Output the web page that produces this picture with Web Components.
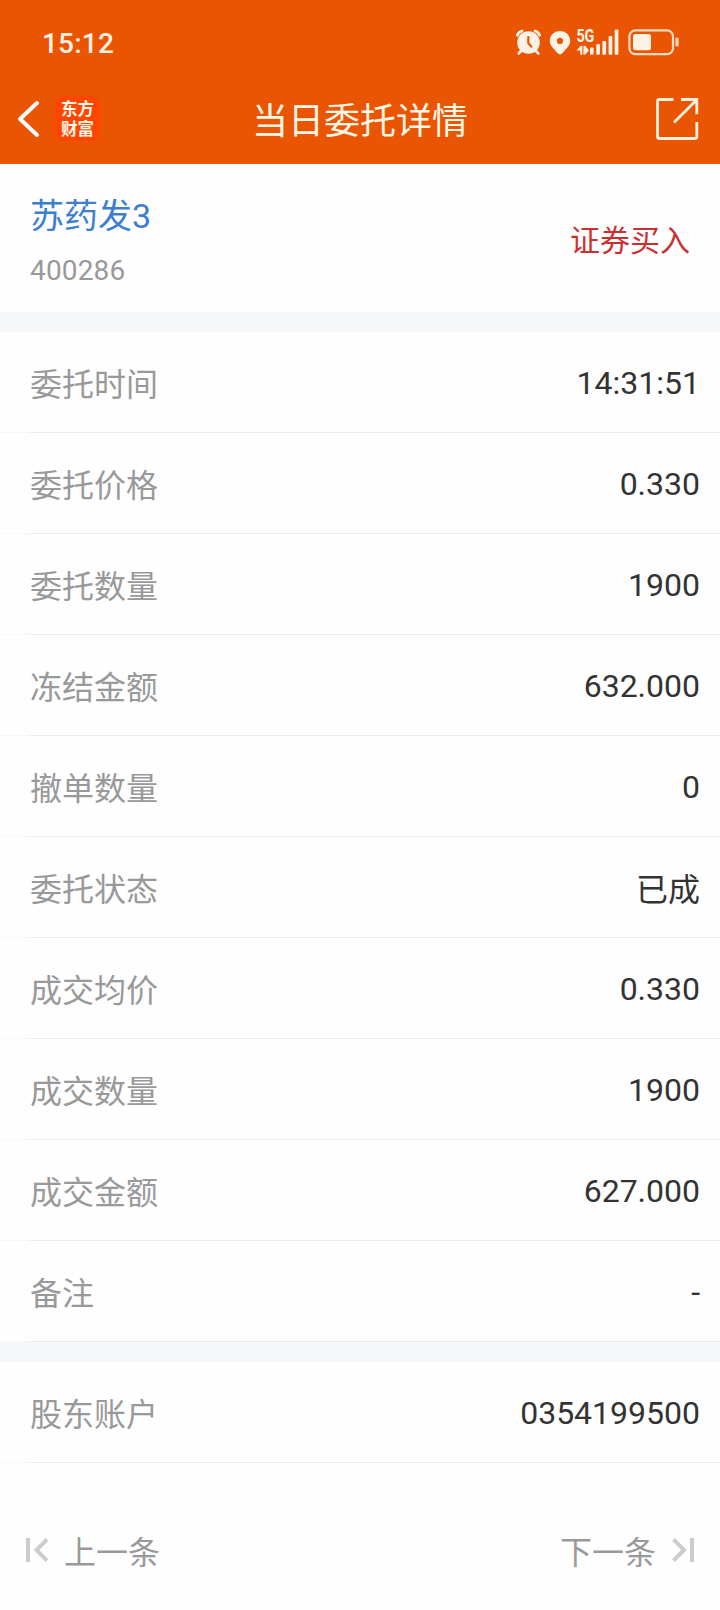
<!DOCTYPE html>
<html lang="zh-CN">
<head>
<meta charset="utf-8">
<title>当日委托详情</title>
<style>
  body {
    margin: 0;
    width: 720px;
    height: 1610px;
    overflow: hidden;
    background: #fefefe;
    color: #333;
    font-family: Roboto, "Noto Sans CJK SC", sans-serif;
  }
</style>
</head>
<body>
<order-page>
  <status-bar time="15:12"></status-bar>
  <title-bar>当日委托详情</title-bar>
  <stock-head code="400286" side="证券买入">苏药发3</stock-head>
  <section-gap></section-gap>
  <detail-row label="委托时间">14:31:51</detail-row>
  <detail-row label="委托价格">0.330</detail-row>
  <detail-row label="委托数量">1900</detail-row>
  <detail-row label="冻结金额">632.000</detail-row>
  <detail-row label="撤单数量">0</detail-row>
  <detail-row label="委托状态" cjk>已成</detail-row>
  <detail-row label="成交均价">0.330</detail-row>
  <detail-row label="成交数量">1900</detail-row>
  <detail-row label="成交金额">627.000</detail-row>
  <detail-row label="备注" last>-</detail-row>
  <section-gap></section-gap>
  <detail-row label="股东账户">0354199500</detail-row>
  <pager-bar></pager-bar>
</order-page>

<script>
class OrderPage extends HTMLElement {
  constructor() {
    super();
    this.attachShadow({ mode: 'open' }).innerHTML = `
      <style>
        :host { display: flex; flex-direction: column; width: 720px; }
      </style>
      <slot></slot>
    `;
  }
}
customElements.define('order-page', OrderPage);

// 状态栏
class StatusBar extends HTMLElement {
  constructor() {
    super();
    this.attachShadow({ mode: 'open' }).innerHTML = `
      <style>
        :host {
          display: flex;
          align-items: flex-start;
          justify-content: space-between;
          box-sizing: border-box;
          height: 80px;
          padding: 27px 41px 0 42px;
          background: #ea5504;
          color: #fff1e4;
        }
        .time {
          font-size: 28px;
          font-weight: 500;
          line-height: 33px;
          letter-spacing: 0.2px;
        }
        .icons { display: flex; }
        svg { display: block; }
      </style>
      <span class="time">${this.getAttribute('time')}</span>
      <div class="icons">
        <!-- 闹钟 -->
        <svg width="34" height="32" viewBox="515 27 34 32" fill="none" stroke="#fff1e4" stroke-linecap="round">
          <circle cx="528.5" cy="42.5" r="11.3" fill="#fff1e4" stroke="none"/>
          <path d="M517.3 35.2 Q518.6 32 522 31M539.7 35.2 Q538.4 32 535 31" stroke-width="2.8"/>
          <path d="M521 51l-2.2 2.4M536 51l2.2 2.4" stroke-width="2.8"/>
          <path d="M528.3 37v6l3 3.6" stroke="#ea5504" stroke-width="2.2"/>
        </svg>
        <!-- 定位 -->
        <svg width="27" height="32" viewBox="549 27 27 32">
          <path fill="#fff1e4" fill-rule="evenodd" d="M560 31c-5.8 0-10.2 4.3-10.2 9.9 0 4.5 3.6 7.6 8.2 12.5q2 1.8 4 0c4.6-4.9 8.2-8 8.2-12.5 0-5.6-4.4-9.9-10.2-9.9zm0 6.8a3.1 3.1 0 1 1 0 6.2a3.1 3.1 0 1 1 0-6.2z"/>
        </svg>
        <!-- 信号 -->
        <svg width="51" height="32" viewBox="576 27 51 32" fill="#fff1e4">
          <text x="576.4" y="42" font-size="17.5" font-weight="700" textLength="18" lengthAdjust="spacingAndGlyphs">5G</text>
          <path d="M576.5 50.5l4.2-4.7h1.6v9h-2v-4.3zM589 50.5l-4 4.3h-1.6v-9h2z"/>
          <rect x="590" y="47.5" width="3.6" height="7.3" rx="1"/>
          <rect x="596.3" y="44" width="3.7" height="10.8" rx="1"/>
          <rect x="602.4" y="41" width="3.7" height="13.8" rx="1"/>
          <rect x="608.6" y="36" width="3.7" height="18.8" rx="1"/>
          <rect x="614.7" y="29.5" width="3.7" height="25.3" rx="1"/>
        </svg>
        <!-- 电池 -->
        <svg width="52" height="32" viewBox="627 27 52 32" fill="#fff1e4">
          <rect x="629.4" y="30.4" width="43.6" height="23.8" rx="6" fill="none" stroke="#ffdcbf" stroke-width="2.2"/>
          <rect x="633" y="34" width="18" height="16.2" rx="2.5"/>
          <rect x="675.4" y="37.5" width="3.2" height="9" rx="1.5" fill="#ffdcbf"/>
        </svg>
      </div>
    `;
  }
}
customElements.define('status-bar', StatusBar);

// 标题栏
class TitleBar extends HTMLElement {
  constructor() {
    super();
    this.attachShadow({ mode: 'open' }).innerHTML = `
      <style>
        :host {
          display: grid;
          grid-template-columns: 1fr auto 1fr;
          box-sizing: border-box;
          height: 84px;
          padding: 16px 21px 0 17px;
          background: #ea5504;
          color: #fff7e6;
        }
        .left { display: flex; }
        .logo {
          box-sizing: border-box;
          width: 45px;
          height: 45px;
          margin-left: 14px;
          padding-top: 4px;
          border-radius: 9px;
          background: #ff4500;
          font-size: 16.5px;
          font-weight: 700;
          line-height: 20px;
          text-align: center;
        }
        .title {
          font-size: 36px;
          line-height: 48px;
          padding-top: 2px;
          margin-right: -4px;
        }
        .share { justify-self: end; margin-top: 1px; }
        svg { display: block; }
      </style>
      <div class="left">
        <svg width="24" height="46" viewBox="17 96 24 46" fill="none" stroke="#fff" stroke-width="4" stroke-linecap="round" stroke-linejoin="round">
          <path d="M37 103L20 119l17 16"/>
        </svg>
        <div class="logo">东方<br>财富</div>
      </div>
      <div class="title"><slot></slot></div>
      <svg class="share" width="44" height="44" viewBox="655 97 44 44" fill="none" stroke="#fff1dc" stroke-width="2.8">
        <path d="M673.5 99.5H659.5q-2 0-2 2V136.5q0 2 2 2H694.8q2 0 2-2V122M681 99.5H696.8V114.3M674 122.5L696.5 100"/>
      </svg>
    `;
  }
}
customElements.define('title-bar', TitleBar);

// 股票名称 + 买卖方向
class StockHead extends HTMLElement {
  constructor() {
    super();
    this.attachShadow({ mode: 'open' }).innerHTML = `
      <style>
        :host {
          display: flex;
          justify-content: space-between;
          box-sizing: border-box;
          height: 148px;
          padding: 28px 30px 0;
        }
        .name { font-size: 34px; line-height: 48px; color: #3c7fd0; }
        .code { font-size: 28px; line-height: 33px; margin-top: 14px; letter-spacing: 0.15px; color: #999; }
        .side { font-size: 30px; line-height: 44px; margin-top: 27px; color: #cb3030; }
      </style>
      <div>
        <div class="name"><slot></slot></div>
        <div class="code">${this.getAttribute('code')}</div>
      </div>
      <div class="side">${this.getAttribute('side')}</div>
    `;
  }
}
customElements.define('stock-head', StockHead);

class SectionGap extends HTMLElement {
  constructor() {
    super();
    this.attachShadow({ mode: 'open' }).innerHTML = `
      <style>
        :host { display: block; height: 20px; background: #f6f7f9; }
      </style>
    `;
  }
}
customElements.define('section-gap', SectionGap);

class DetailRow extends HTMLElement {
  constructor() {
    super();
    this.attachShadow({ mode: 'open' }).innerHTML = `
      <style>
        :host {
          display: grid;
          grid-template-rows: 100px 1px;
          grid-template-columns: 30px 1fr auto 20px;
          font-size: 32px;
          line-height: 97px;
        }
        .label { grid-column: 2; padding-top: 5px; color: #999; }
        .value { grid-column: 3; padding-top: 3px; }
        :host([cjk]) .value { padding-top: 5px; }
        span { height: 95px; }
        /* 分割线左侧 30px 颜色更浅 */
        .line {
          grid-column: 1 / -1;
          background: linear-gradient(to right, #f8f8f8 30px, #ebebeb 30px);
        }
        :host([last]) .line {
          background: linear-gradient(to right, #f6f7f9 30px, #e9e9ea 30px);
        }
      </style>
      <span class="label">${this.getAttribute('label')}</span>
      <span class="value"><slot></slot></span>
      <div class="line"></div>
    `;
  }
}
customElements.define('detail-row', DetailRow);

// 上一条 / 下一条
class PagerBar extends HTMLElement {
  constructor() {
    super();
    this.attachShadow({ mode: 'open' }).innerHTML = `
      <style>
        :host {
          display: flex;
          justify-content: space-between;
          align-items: center;
          box-sizing: border-box;
          height: 147px;
          padding: 27px 25px 0;
          font-size: 32px;
          line-height: 48px;
          color: #999;
        }
        div { display: flex; align-items: center; gap: 15px; }
        span { padding-top: 6px; }
        svg { display: block; }
      </style>
      <div>
        <svg width="24" height="30" viewBox="25 1535 24 30" fill="none" stroke="#ccc" stroke-width="4">
          <path d="M28 1538v24M47 1539.3L36.5 1550l10.5 10.7"/>
        </svg>
        <span>上一条</span>
      </div>
      <div>
        <span>下一条</span>
        <svg width="24" height="30" viewBox="671 1535 24 30" fill="none" stroke="#ccc" stroke-width="4">
          <path d="M692 1538v24M673.5 1539.3L684 1550l-10.5 10.7"/>
        </svg>
      </div>
    `;
  }
}
customElements.define('pager-bar', PagerBar);
</script>
</body>
</html>
